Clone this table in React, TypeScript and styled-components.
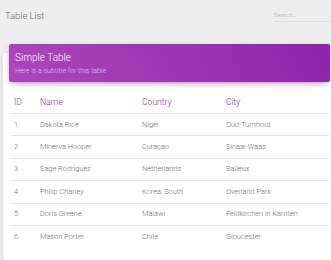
import React from "react";
import styled, { createGlobalStyle } from "styled-components";

const Global = createGlobalStyle`
  html, body { margin: 0; padding: 0; overflow: hidden; }
  body {
    background: #eeeeee;
    font-family: Roboto, "Noto Sans", Arial, sans-serif;
    font-weight: 300;
    color: #555555;
  }
`;

const Page = styled.div`
  width: 336px;
  height: 260px;
  display: flex;
  flex-direction: column;
`;

const NavBar = styled.div`
  display: flex;
  align-items: flex-start;
  justify-content: space-between;
  padding: 9px 0 0 5px;
  height: 45px;
  box-sizing: border-box;
`;

const NavTitle = styled.div`
  font-size: 9.4px;
  color: #6a6a6a;
  font-weight: 300;
  line-height: 13px;
`;

const SearchBox = styled.div`
  width: 56px;
  margin-top: 1px;
  margin-right: 6px;
  border-bottom: 1px solid #dcdcdc;
  font-size: 6px;
  color: #aaaaaa;
  line-height: 9px;
  padding-bottom: 2px;
`;

const Card = styled.div`
  margin: 8px 0 0 3px;
  width: 333px;
  flex: 1;
  background: #ffffff;
  border-radius: 3px;
  box-shadow: 0 1px 4px 0 rgba(0, 0, 0, 0.14);
  display: flex;
  flex-direction: column;
`;

const CardHeader = styled.div`
  margin: -9px 6px 0 6px;
  height: 38px;
  box-sizing: border-box;
  padding: 7px 6px;
  border-radius: 2px;
  background: linear-gradient(60deg, #ab47bc, #8e24aa);
  box-shadow: 0 2px 6px -2px rgba(0, 0, 0, 0.3), 0 3px 8px -4px rgba(156, 39, 176, 0.5);
`;

const CardTitle = styled.div`
  color: #ffffff;
  font-size: 10px;
  line-height: 13px;
  font-weight: 300;
`;

const CardSubtitle = styled.div`
  color: rgba(255, 255, 255, 0.7);
  font-size: 7px;
  line-height: 10px;
  margin-top: 2px;
`;

const CardBody = styled.div`
  padding: 8px 6px 0 8px;
`;

const Table = styled.table`
  width: 100%;
  border-collapse: collapse;
  table-layout: fixed;
`;

const Th = styled.th<{ $w?: number }>`
  ${(p) => (p.$w ? `width: ${p.$w}px;` : "")}
  text-align: left;
  font-weight: 300;
  font-size: 8.6px;
  color: #9c27b0;
  padding: 6px 3px 5px 3px;
  height: 12px;
  line-height: 11px;
  border-bottom: 1px solid #e4e4e4;
`;

const Td = styled.td`
  font-size: 7.4px;
  color: #6e6e6e;
  padding: 0 3px;
  height: 21.4px;
  line-height: 10px;
  border-bottom: 1px solid #e4e4e4;
  white-space: nowrap;
`;

const Tr = styled.tr<{ $last?: boolean }>`
  ${(p) => (p.$last ? `td { border-bottom: none; }` : "")}
`;

const rows = [
  ["1", "Dakota Rice", "Niger", "Oud-Turnhout"],
  ["2", "Minerva Hooper", "Curaçao", "Sinaai-Waas"],
  ["3", "Sage Rodriguez", "Netherlands", "Baileux"],
  ["4", "Philip Chaney", "Korea, South", "Overland Park"],
  ["5", "Doris Greene", "Malawi", "Feldkirchen in Kärnten"],
  ["6", "Mason Porter", "Chile", "Gloucester"],
];

export default function App() {
  return (
    <>
      <Global />
      <Page>
        <NavBar>
          <NavTitle>Table List</NavTitle>
          <SearchBox>Search...</SearchBox>
        </NavBar>
        <Card>
          <CardHeader>
            <CardTitle>Simple Table</CardTitle>
            <CardSubtitle>Here is a subtitle for this table</CardSubtitle>
          </CardHeader>
          <CardBody>
            <Table>
              <thead>
                <tr>
                  <Th $w={20}>ID</Th>
                  <Th $w={96}>Name</Th>
                  <Th $w={78}>Country</Th>
                  <Th>City</Th>
                </tr>
              </thead>
              <tbody>
                {rows.map((r, i) => (
                  <Tr key={r[0]} $last={i === rows.length - 1}>
                    {r.map((c, j) => (
                      <Td key={j}>{c}</Td>
                    ))}
                  </Tr>
                ))}
              </tbody>
            </Table>
          </CardBody>
        </Card>
      </Page>
    </>
  );
}
